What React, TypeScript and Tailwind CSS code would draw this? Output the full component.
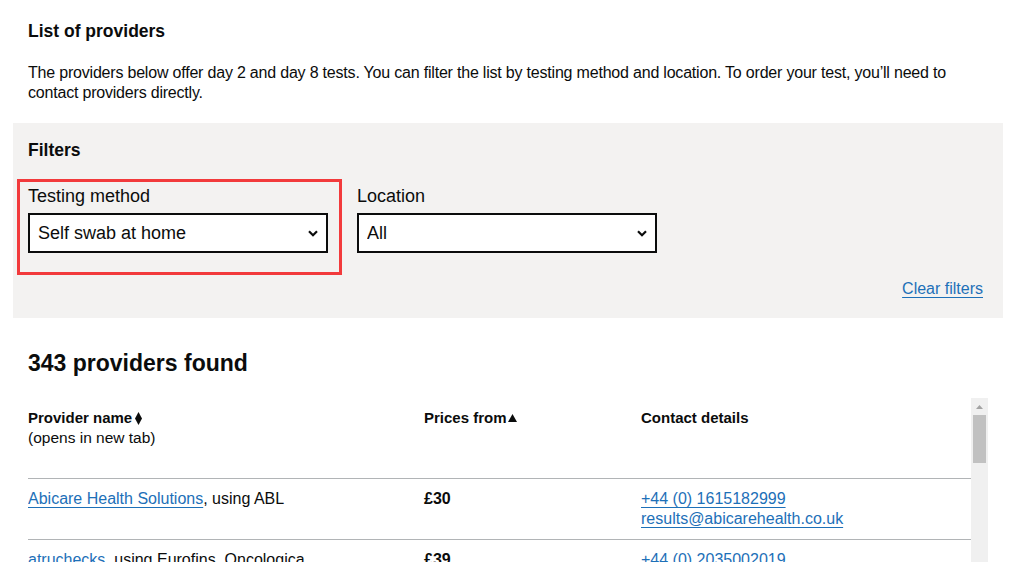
import React from 'react'

type Provider = {
  name: string
  labs: string
  price: string
  phone: string
  email: string
}

const providers: Provider[] = [
  { name: 'Abicare Health Solutions', labs: 'ABL', price: '£30', phone: '+44 (0) 1615182999', email: 'results@abicarehealth.co.uk' },
  { name: 'atruchecks', labs: 'Eurofins, Oncologica', price: '£39', phone: '+44 (0) 2035002019', email: 'info@atruchecks.com' },
  { name: 'Aventus Clinic', labs: 'Halo Verify', price: '£40', phone: '+44 (0) 2071181800', email: 'hello@aventusclinic.com' },
  { name: 'Bioscan Health', labs: 'Bioscan', price: '£42', phone: '+44 (0) 3301130470', email: 'support@bioscanhealth.co.uk' },
  { name: 'Biograd Diagnostics', labs: 'Biograd', price: '£44', phone: '+44 (0) 2030869680', email: 'info@biograd.co.uk' },
  { name: 'Cambridge Clinical Labs', labs: 'CCL', price: '£45', phone: '+44 (0) 1223750460', email: 'covid@camclinlabs.co.uk' },
]

function Chevron() {
  return (
    <svg
      className="pointer-events-none absolute right-[10px] top-[17px]"
      width="10"
      height="7"
      viewBox="0 0 10 7"
      fill="none"
    >
      <path d="M1 1.2 5 5.2 9 1.2" stroke="#0b0c0c" strokeWidth="2.2" />
    </svg>
  )
}

function FakeSelect({ value }: { value: string }) {
  return (
    <div className="relative mt-[5px] w-[300px]">
      <select
        defaultValue={value}
        className="block h-[40px] w-[300px] appearance-none rounded-none border-2 border-[#0b0c0c] bg-white pl-[8px] text-[18px] text-[#0b0c0c] outline-none"
      >
        <option>{value}</option>
      </select>
      <Chevron />
    </div>
  )
}

export default function App() {
  return (
    <div className="h-[562px] overflow-hidden bg-white font-['Liberation_Sans',Arial,sans-serif] text-[#0b0c0c]">
      {/* Intro */}
      <div className="px-[28px] pt-[19px]">
        <h2 className="text-[17.5px] font-bold leading-[24px]">List of providers</h2>
        <p className="mt-[20px] text-[16px] leading-[20px] tracking-[-0.2px]">
          The providers below offer day 2 and day 8 tests. You can filter the list by testing method and location. To
          order your test, you’ll need to contact providers directly.
        </p>
      </div>

      {/* Filters */}
      <div className="mx-[13px] mt-[20px] w-[990px] bg-[#f3f2f1] pb-[19px] pl-[15px] pr-[20px] pt-[15px]">
        <h3 className="text-[17.5px] font-bold leading-[24px]">Filters</h3>
        <div className="mt-[17px] flex items-start">
          <div className="-ml-[11px] border-[3px] border-[#f23a3c] pb-[19px] pl-[8px] pr-[11px] pt-[2px]">
            <label className="block text-[18px] leading-[24px]">Testing method</label>
            <FakeSelect value="Self swab at home" />
          </div>
          <div className="ml-[15px] pt-[5px]">
            <label className="block text-[18px] leading-[24px]">Location</label>
            <FakeSelect value="All" />
          </div>
        </div>
        <div className="mt-[4px] text-right text-[16px] leading-[20px]">
          <a href="#" className="text-[#1d70b8] underline underline-offset-[3px]">
            Clear filters
          </a>
        </div>
      </div>

      {/* Results */}
      <h2 className="ml-[28px] mt-[30px] text-[23px] font-bold leading-[30px]">343 providers found</h2>

      <div className="ml-[28px] mt-[20px] flex h-[300px] w-[960px]">
        <div className="w-[943px] overflow-hidden">
          <table className="w-[943px] table-fixed border-collapse text-left">
            <thead>
              <tr className="border-b border-[#b1b4b6]">
                <th className="w-[396px] pb-[30px] pt-[10px] align-top font-normal">
                  <span className="flex items-center text-[15px] font-bold leading-[20px]">
                    Provider name
                    <svg className="ml-[3px]" width="7" height="13" viewBox="0 0 7 13">
                      <path d="M3.5 0 7 6.5 3.5 13 0 6.5Z" fill="#0b0c0c" />
                    </svg>
                  </span>
                  <span className="block text-[15.5px] leading-[20px]">(opens in new tab)</span>
                </th>
                <th className="w-[217px] pb-[30px] pt-[10px] align-top">
                  <span className="flex items-center text-[15px] font-bold leading-[20px]">
                    Prices from
                    <svg className="ml-[1px]" width="9" height="8" viewBox="0 0 9 8">
                      <path d="M4.5 0 9 8H0Z" fill="#0b0c0c" />
                    </svg>
                  </span>
                </th>
                <th className="pb-[30px] pt-[10px] align-top text-[15px] font-bold leading-[20px]">Contact details</th>
              </tr>
            </thead>
            <tbody>
              {providers.map(p => (
                <tr key={p.name} className="border-b border-[#b1b4b6] text-[16px] leading-[20px]">
                  <td className="pb-[10px] pr-[20px] pt-[10px] align-top">
                    <a href="#" className="text-[#1d70b8] underline underline-offset-[3px]">
                      {p.name}
                    </a>
                    , using {p.labs}
                  </td>
                  <td className="pb-[10px] pt-[10px] align-top font-bold">{p.price}</td>
                  <td className="pb-[10px] pt-[10px] align-top">
                    <a href="#" className="block text-[#1d70b8] underline underline-offset-[3px]">
                      {p.phone}
                    </a>
                    <a href="#" className="block text-[#1d70b8] underline underline-offset-[3px]">
                      {p.email}
                    </a>
                  </td>
                </tr>
              ))}
            </tbody>
          </table>
        </div>

        {/* Scrollbar of the table region */}
        <div className="flex w-[17px] flex-col bg-[#f0f0f0]">
          <div className="flex h-[17px] items-center justify-center">
            <svg width="7" height="4" viewBox="0 0 7 4">
              <path d="M3.5 0 7 4H0Z" fill="#a3a3a3" />
            </svg>
          </div>
          <div className="mx-[2px] h-[48px] bg-[#c1c1c1]" />
        </div>
      </div>
    </div>
  )
}
